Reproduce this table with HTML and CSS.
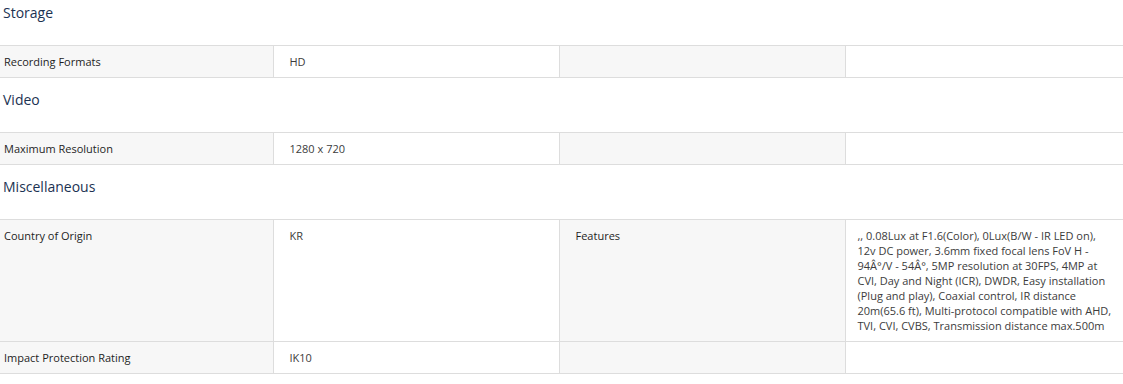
FILE: index.html
```html
<!doctype html>
<html>
<head>
  <meta charset="utf-8">
  <link rel="stylesheet" href="styles.css">
</head>
<body>

  <div class="section">
    <h3 class="section-title">Storage</h3>
    <table class="specs">
      <colgroup><col class="c1"><col class="c2"><col class="c3"><col class="c4"></colgroup>
      <tr>
        <td class="label">Recording Formats</td>
        <td class="value">HD</td>
        <td class="label"></td>
        <td class="value last"></td>
      </tr>
    </table>
  </div>

  <div class="section">
    <h3 class="section-title">Video</h3>
    <table class="specs">
      <colgroup><col class="c1"><col class="c2"><col class="c3"><col class="c4"></colgroup>
      <tr>
        <td class="label">Maximum Resolution</td>
        <td class="value">1280 x 720</td>
        <td class="label"></td>
        <td class="value last"></td>
      </tr>
    </table>
  </div>

  <div class="section">
    <h3 class="section-title">Miscellaneous</h3>
    <table class="specs">
      <colgroup><col class="c1"><col class="c2"><col class="c3"><col class="c4"></colgroup>
      <tr>
        <td class="label">Country of Origin</td>
        <td class="value">KR</td>
        <td class="label">Features</td>
        <td class="value last">,, 0.08Lux at F1.6(Color), 0Lux(B/W - IR LED on), 12v DC power, 3.6mm fixed focal lens FoV H - 94Â°/V - 54Â°, 5MP resolution at 30FPS, 4MP at CVI, Day and Night (ICR), DWDR, Easy installation (Plug and play), Coaxial control, IR distance 20m(65.6 ft), Multi-protocol compatible with AHD, TVI, CVI, CVBS, Transmission distance max.500m</td>
      </tr>
      <tr>
        <td class="label">Impact Protection Rating</td>
        <td class="value">IK10</td>
        <td class="label"></td>
        <td class="value last"></td>
      </tr>
    </table>
  </div>

</body>
</html>
```

FILE: styles.css
```css
body {
  margin: 0;
  background: #ffffff;
  font-family: "Open Sans", "Noto Sans", sans-serif;
}

.section-title {
  margin: 0;
  height: 54px;
  box-sizing: border-box;
  padding: 12px 3px 0;
  font-size: 14px;
  line-height: 20px;
  font-weight: 500;
  color: #1b3252;
}

.section:first-child .section-title {
  height: 45px;
  padding-top: 3px;
}

.specs {
  width: 100%;
  border-collapse: collapse;
  table-layout: fixed;
  border-top: 1px solid #dddddd;
}

.c1 { width: 273px; }
.c2 { width: 286px; }
.c3 { width: 286px; }

.specs td {
  vertical-align: top;
  padding: 8px 8px 8px 16px;
  font-size: 11px;
  line-height: 15px;
  border-bottom: 1px solid #dddddd;
  border-right: 1px solid #dddddd;
}

.specs td.label {
  background: #f7f7f7;
  color: #1e1e1e;
}

.specs td:first-child {
  padding-left: 4px;
}

.specs td.value {
  background: #ffffff;
  color: #3c3c3c;
}

.specs td.last {
  border-right: none;
  padding-left: 12px;
}
```
